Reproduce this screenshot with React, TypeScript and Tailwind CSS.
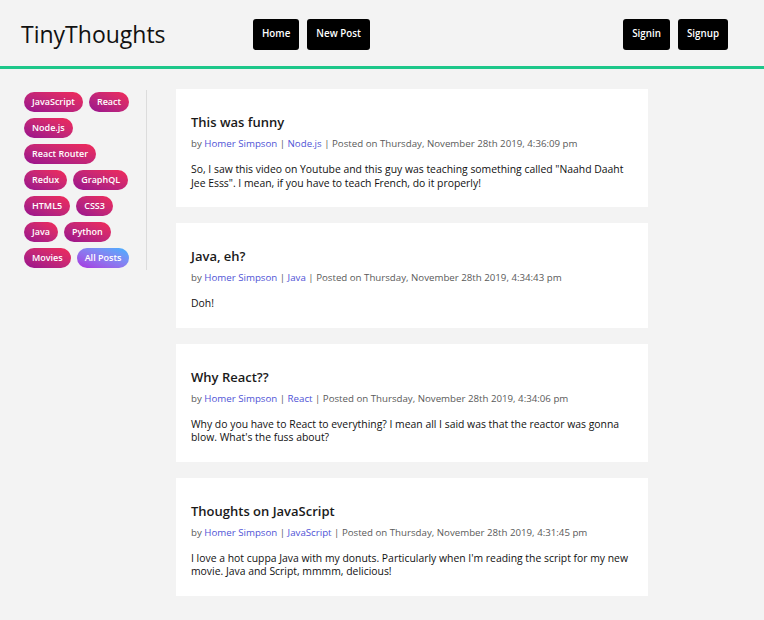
const tags = [
  "JavaScript",
  "React",
  "Node.js",
  "React Router",
  "Redux",
  "GraphQL",
  "HTML5",
  "CSS3",
  "Java",
  "Python",
  "Movies",
];

const posts = [
  {
    title: "This was funny",
    tag: "Node.js",
    date: "Thursday, November 28th 2019, 4:36:09 pm",
    body: 'So, I saw this video on Youtube and this guy was teaching something called "Naahd Daaht Jee Esss". I mean, if you have to teach French, do it properly!',
  },
  {
    title: "Java, eh?",
    tag: "Java",
    date: "Thursday, November 28th 2019, 4:34:43 pm",
    body: "Doh!",
  },
  {
    title: "Why React??",
    tag: "React",
    date: "Thursday, November 28th 2019, 4:34:06 pm",
    body: "Why do you have to React to everything? I mean all I said was that the reactor was gonna blow. What's the fuss about?",
  },
  {
    title: "Thoughts on JavaScript",
    tag: "JavaScript",
    date: "Thursday, November 28th 2019, 4:31:45 pm",
    body: "I love a hot cuppa Java with my donuts. Particularly when I'm reading the script for my new movie. Java and Script, mmmm, delicious!",
  },
];

const NavButton = ({ label }: { label: string }) => (
  <a
    href="#"
    className="h-[31px] px-[9px] flex items-center bg-black text-white text-[9.8px] font-semibold rounded-[3px]"
  >
    {label}
  </a>
);

const Header = () => (
  <header className="h-[69px] flex items-center justify-between border-b-[3px] border-[#1dc78a] pl-[21px] pr-[36px] pt-[3px]">
    <div className="flex items-center">
      <h1 className="w-[232px] text-[23px] text-[#111]">TinyThoughts</h1>
      <nav className="flex gap-[8px]">
        <NavButton label="Home" />
        <NavButton label="New Post" />
      </nav>
    </div>
    <div className="flex gap-[8px]">
      <NavButton label="Signin" />
      <NavButton label="Signup" />
    </div>
  </header>
);

const Sidebar = () => (
  <aside className="ml-[24px] mt-[1px] pt-[2px] pb-[2px] pr-[12px] border-r border-[#dcdcdc] self-start">
    <div className="w-[110px] flex flex-wrap gap-x-[6px] gap-y-[6px]">
      {tags.map((t) => (
        <a
          key={t}
          href="#"
          className="h-[20px] px-[8px] flex items-center rounded-full text-white text-[9px] font-semibold bg-gradient-to-tr from-[#980f8e] to-[#f22a57]"
        >
          {t}
        </a>
      ))}
      <a
        href="#"
        className="h-[20px] px-[8px] flex items-center rounded-full text-white text-[9px] font-semibold bg-gradient-to-tr from-[#a52ddf] to-[#35b2ff]"
      >
        All Posts
      </a>
    </div>
  </aside>
);

const PostCard = ({ post }: { post: (typeof posts)[number] }) => (
  <article className="bg-white pt-[23px] pb-[17px] px-[15px]">
    <h2 className="text-[13px] leading-[20px] font-semibold text-[#1a1a1a]">{post.title}</h2>
    <p className="mt-[5px] text-[9.7px] leading-[14px] text-[#5a5a5a]">
      by <a href="#" className="text-[#4f53d6]">Homer Simpson</a> |{" "}
      <a href="#" className="text-[#4f53d6]">{post.tag}</a> | Posted on {post.date}
    </p>
    <p className="mt-[12px] text-[10.4px] leading-[13.5px] text-[#111]">{post.body}</p>
  </article>
);

export default function App() {
  return (
    <div className="min-h-[620px] bg-[#f3f3f3] font-['Open_Sans',sans-serif]">
      <Header />
      <main className="flex pt-[20px] pb-[24px]">
        <Sidebar />
        <section className="ml-[29px] w-[472px] flex flex-col gap-[16px]">
          {posts.map((p) => (
            <PostCard key={p.title} post={p} />
          ))}
        </section>
      </main>
    </div>
  );
}
